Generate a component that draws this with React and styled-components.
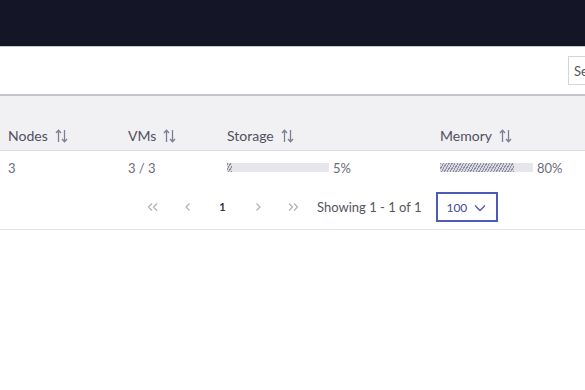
import React from "react";
import styled, { createGlobalStyle } from "styled-components";

const Global = createGlobalStyle`
  html, body { margin: 0; padding: 0; background: #fff; }
  body { font-family: "Lato", "Open Sans", sans-serif; overflow: hidden; }
`;

const Page = styled.div`
  width: 585px;
  height: 390px;
  display: flex;
  flex-direction: column;
  overflow: hidden;
`;

const TopBar = styled.div`
  height: 46px;
  background: #141628;
  border-bottom: 1px solid #c9c9d2;
  flex-shrink: 0;
`;

const Toolbar = styled.div`
  height: 47px;
  display: flex;
  align-items: center;
  justify-content: flex-end;
  border-bottom: 2px solid #c4c4ce;
  overflow: hidden;
`;

const Search = styled.div`
  width: 60px;
  height: 29px;
  margin-right: -43px;
  border: 1px solid #d4d4da;
  border-right: none;
  display: flex;
  align-items: center;
  padding-left: 5px;
  font-size: 13px;
  color: #555;
  box-sizing: border-box;
  flex-shrink: 0;
  white-space: nowrap;
  overflow: hidden;
`;

const Grid = styled.div`
  display: grid;
  grid-template-columns: 120px 99px 213px 1fr;
  padding-left: 8px;
`;

const HeadRow = styled(Grid)`
  background: #f1f1f4;
  height: 55px;
  align-items: end;
  padding-bottom: 6px;
  box-sizing: border-box;
  border-bottom: 1px solid #dcdce2;
`;

const HeadCell = styled.div`
  display: flex;
  align-items: center;
  gap: 7px;
  font-size: 14px;
  color: #505060;
`;

const SortIcon = () => (
  <svg width="13" height="14" viewBox="0 0 13 14" fill="none" stroke="#7b7f96" strokeWidth="1.3">
    <path d="M3.5 13V1.5M1 4l2.5-2.7L6 4" />
    <path d="M9.5 1v11.5M7 10l2.5 2.7L12 10" />
  </svg>
);

const BodyRow = styled(Grid)`
  height: 33px;
  align-items: center;
`;

const Cell = styled.div`
  display: flex;
  align-items: center;
  font-size: 13px;
  color: #6c6c78;
`;

const Track = styled.div`
  width: ${(p) => p.$w}px;
  height: 9px;
  background: #e6e6ec;
  margin-right: 4px;
`;

const Fill = styled.div`
  height: 100%;
  background: repeating-linear-gradient(
    -60deg,
    #8e90a0 0px,
    #8e90a0 1px,
    #d8d8e0 1px,
    #d8d8e0 2.5px
  );
`;

const Pager = styled.div`
  height: 45px;
  display: flex;
  align-items: center;
  padding-left: 135px;
  border-bottom: 1px solid #e2e2e8;
  font-size: 13px;
`;

const PageBtn = styled.div`
  width: 35px;
  display: flex;
  justify-content: center;
  align-items: center;
  color: #333344;
  font-size: 11px;
  font-weight: 700;
`;

const Arrow = ({ d }) => (
  <svg width="14" height="10" viewBox="0 0 14 10" fill="none" stroke="#b0b0bc" strokeWidth="1.2">
    <path d={d} />
  </svg>
);

const Showing = styled.div`
  color: #55555f;
  margin-left: 7px;
  margin-right: 15px;
`;

const Select = styled.div`
  width: 62px;
  height: 30px;
  box-sizing: border-box;
  border: 2px solid #4b5cb8;
  display: flex;
  align-items: center;
  justify-content: space-between;
  padding: 2px 10px 0 8px;
  font-size: 12px;
  color: #3d4c9e;
`;

const Chevron = () => (
  <svg width="12" height="8" viewBox="0 0 12 8" fill="none" stroke="#4b5cb8" strokeWidth="1.4">
    <path d="M1 1.5l5 5 5-5" />
  </svg>
);

const Bar = ({ w, pct }) => (
  <Track $w={w}>
    <Fill style={{ width: `${pct}%` }} />
  </Track>
);

export default function App() {
  return (
    <Page>
      <Global />
      <TopBar />
      <Toolbar>
        <Search>Search</Search>
      </Toolbar>
      <HeadRow>
        <HeadCell>Nodes <SortIcon /></HeadCell>
        <HeadCell>VMs <SortIcon /></HeadCell>
        <HeadCell>Storage <SortIcon /></HeadCell>
        <HeadCell>Memory <SortIcon /></HeadCell>
      </HeadRow>
      <BodyRow>
        <Cell>3</Cell>
        <Cell>3 / 3</Cell>
        <Cell><Bar w={102} pct={5} />5%</Cell>
        <Cell><Bar w={93} pct={80} />80%</Cell>
      </BodyRow>
      <Pager>
        <PageBtn><Arrow d="M6 1.5L2.5 5 6 8.5M11 1.5L7.5 5 11 8.5" /></PageBtn>
        <PageBtn><Arrow d="M8.5 1.5L5 5l3.5 3.5" /></PageBtn>
        <PageBtn>1</PageBtn>
        <PageBtn><Arrow d="M5.5 1.5L9 5 5.5 8.5" /></PageBtn>
        <PageBtn><Arrow d="M3 1.5L6.5 5 3 8.5M8 1.5l3.5 3.5L8 8.5" /></PageBtn>
        <Showing>Showing 1 - 1 of 1</Showing>
        <Select>100 <Chevron /></Select>
      </Pager>
    </Page>
  );
}
